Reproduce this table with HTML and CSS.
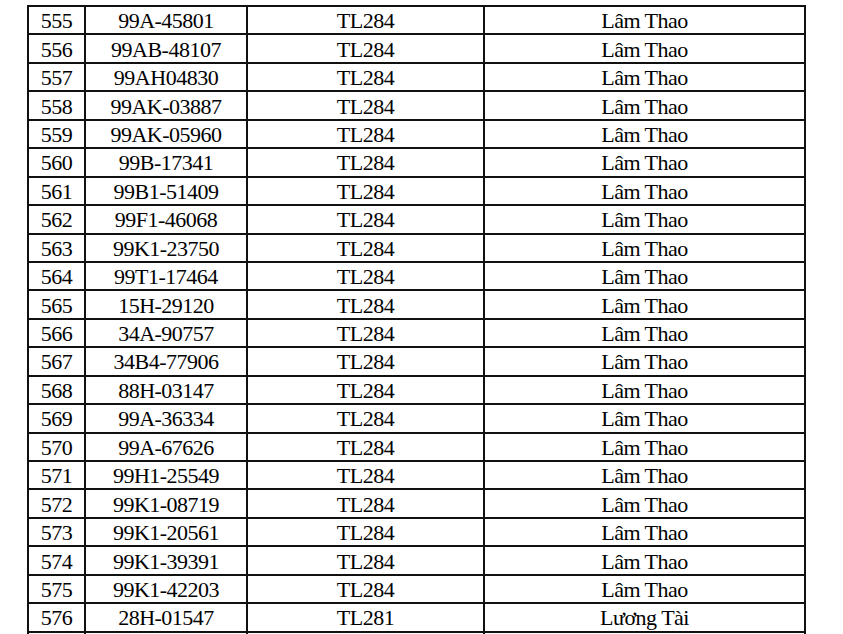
FILE: index.html
```html
<!DOCTYPE html>
<html lang="vi">
<head>
<meta charset="utf-8">
<title>Danh sách</title>
<link rel="stylesheet" href="styles.css">
</head>
<body>
<table class="list">
<colgroup>
<col class="c1"><col class="c2"><col class="c3"><col class="c4">
</colgroup>
<tbody>
<tr><td>555</td><td>99A-45801</td><td>TL284</td><td>Lâm Thao</td></tr>
<tr><td>556</td><td>99AB-48107</td><td>TL284</td><td>Lâm Thao</td></tr>
<tr><td>557</td><td>99AH04830</td><td>TL284</td><td>Lâm Thao</td></tr>
<tr><td>558</td><td>99AK-03887</td><td>TL284</td><td>Lâm Thao</td></tr>
<tr><td>559</td><td>99AK-05960</td><td>TL284</td><td>Lâm Thao</td></tr>
<tr><td>560</td><td>99B-17341</td><td>TL284</td><td>Lâm Thao</td></tr>
<tr><td>561</td><td>99B1-51409</td><td>TL284</td><td>Lâm Thao</td></tr>
<tr><td>562</td><td>99F1-46068</td><td>TL284</td><td>Lâm Thao</td></tr>
<tr><td>563</td><td>99K1-23750</td><td>TL284</td><td>Lâm Thao</td></tr>
<tr><td>564</td><td>99T1-17464</td><td>TL284</td><td>Lâm Thao</td></tr>
<tr><td>565</td><td>15H-29120</td><td>TL284</td><td>Lâm Thao</td></tr>
<tr><td>566</td><td>34A-90757</td><td>TL284</td><td>Lâm Thao</td></tr>
<tr><td>567</td><td>34B4-77906</td><td>TL284</td><td>Lâm Thao</td></tr>
<tr><td>568</td><td>88H-03147</td><td>TL284</td><td>Lâm Thao</td></tr>
<tr><td>569</td><td>99A-36334</td><td>TL284</td><td>Lâm Thao</td></tr>
<tr><td>570</td><td>99A-67626</td><td>TL284</td><td>Lâm Thao</td></tr>
<tr><td>571</td><td>99H1-25549</td><td>TL284</td><td>Lâm Thao</td></tr>
<tr><td>572</td><td>99K1-08719</td><td>TL284</td><td>Lâm Thao</td></tr>
<tr><td>573</td><td>99K1-20561</td><td>TL284</td><td>Lâm Thao</td></tr>
<tr><td>574</td><td>99K1-39391</td><td>TL284</td><td>Lâm Thao</td></tr>
<tr><td>575</td><td>99K1-42203</td><td>TL284</td><td>Lâm Thao</td></tr>
<tr><td>576</td><td>28H-01547</td><td>TL281</td><td>Lương Tài</td></tr>
<tr><td></td><td></td><td></td><td></td></tr>
</tbody>
</table>
</body>
</html>
```
FILE: styles.css
```css
html, body {
  margin: 0;
  padding: 0;
  background: #fff;
}
body {
  padding: 5px 0 0 27px;
  font-family: "Liberation Serif", "Times New Roman", serif;
  color: #000;
}
.list {
  border-collapse: collapse;
  table-layout: fixed;
  width: 777px;
}
.c1 { width: 57px; }
.c2 { width: 162px; }
.c3 { width: 237px; }
.c4 { width: 321px; }
.list td {
  border: 2px solid #111;
  height: 28.44px;
  box-sizing: border-box;
  padding: 1px 0 0;
  text-align: center;
  vertical-align: middle;
  font-size: 22px;
  line-height: 25px;
  letter-spacing: -0.5px;
  white-space: nowrap;
  overflow: hidden;
}
```
